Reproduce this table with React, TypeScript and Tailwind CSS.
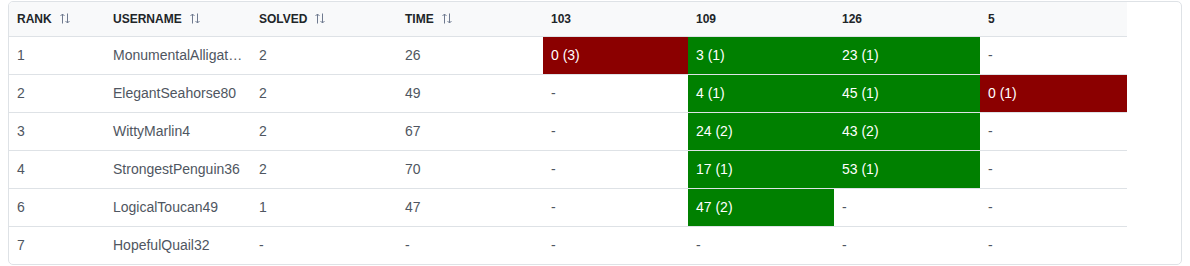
import React from "react";

type Cell = { score: string; ok?: boolean } | null;

type Row = {
  rank: number;
  username: string;
  solved: string;
  time: string;
  cells: Cell[];
};

const problems = ["103", "109", "126", "5"];

// username shown as the leaderboard shows it (already shortened)
const rows: Row[] = [
  {
    rank: 1,
    username: "MonumentalAlligat…",
    solved: "2",
    time: "26",
    cells: [{ score: "0 (3)", ok: false }, { score: "3 (1)", ok: true }, { score: "23 (1)", ok: true }, null],
  },
  {
    rank: 2,
    username: "ElegantSeahorse80",
    solved: "2",
    time: "49",
    cells: [null, { score: "4 (1)", ok: true }, { score: "45 (1)", ok: true }, { score: "0 (1)", ok: false }],
  },
  {
    rank: 3,
    username: "WittyMarlin4",
    solved: "2",
    time: "67",
    cells: [null, { score: "24 (2)", ok: true }, { score: "43 (2)", ok: true }, null],
  },
  {
    rank: 4,
    username: "StrongestPenguin36",
    solved: "2",
    time: "70",
    cells: [null, { score: "17 (1)", ok: true }, { score: "53 (1)", ok: true }, null],
  },
  {
    rank: 6,
    username: "LogicalToucan49",
    solved: "1",
    time: "47",
    cells: [null, { score: "47 (2)", ok: true }, null, null],
  },
  {
    rank: 7,
    username: "HopefulQuail32",
    solved: "-",
    time: "-",
    cells: [null, null, null, null],
  },
];

const SortIcon = () => (
  <svg width="10" height="11" viewBox="0 0 10 11" className="ml-[8px] shrink-0" fill="none">
    <path d="M2.5 10.5V1M0.5 3L2.5 1L4.5 3" stroke="#6f7a8f" strokeWidth="1" />
    <path d="M7.5 0.5V10M5.5 8L7.5 10L9.5 8" stroke="#6f7a8f" strokeWidth="1" />
  </svg>
);

function HeaderCell({ label, sortable }: { label: string; sortable?: boolean }) {
  return (
    <th className="h-[34px] px-2 text-left align-middle border-b border-[#dee2e6] font-bold text-[12px] text-[#212529]">
      <div className="flex items-center">
        <span>{label}</span>
        {sortable && <SortIcon />}
      </div>
    </th>
  );
}

export default function App() {
  return (
    <div className="bg-white pt-[1px] px-2" style={{ fontFamily: '"Liberation Sans", Arial, sans-serif' }}>
      <div className="border border-[#dee2e6] rounded-[5px] overflow-hidden">
        <table className="table-fixed border-collapse w-[1118px]">
          <colgroup>
            <col className="w-[96px]" />
            <col className="w-[146px]" />
            <col className="w-[146px]" />
            <col className="w-[146px]" />
            <col className="w-[145px]" />
            <col className="w-[146px]" />
            <col className="w-[146px]" />
            <col className="w-[147px]" />
          </colgroup>
          <thead className="bg-[#f8f9fa]">
            <tr>
              <HeaderCell label="RANK" sortable />
              <HeaderCell label="USERNAME" sortable />
              <HeaderCell label="SOLVED" sortable />
              <HeaderCell label="TIME" sortable />
              {problems.map((p) => (
                <HeaderCell key={p} label={p} />
              ))}
            </tr>
          </thead>
          <tbody className="text-[14px] text-[#4f5661]">
            {rows.map((r, i) => (
              <tr key={r.rank} className={i < rows.length - 1 ? "border-b border-[#dee2e6]" : ""}>
                <td className="h-[38px] px-2">{r.rank}</td>
                <td className="h-[38px] px-2 whitespace-nowrap">{r.username}</td>
                <td className="h-[38px] px-2">{r.solved}</td>
                <td className="h-[38px] px-2">{r.time}</td>
                {r.cells.map((c, j) =>
                  c ? (
                    <td
                      key={j}
                      className={
                        c.ok
                          ? "h-[38px] px-2 bg-[#008000] text-white"
                          : "h-[38px] px-2 bg-[#8b0000] text-white"
                      }
                    >
                      {c.score}
                    </td>
                  ) : (
                    <td key={j} className="h-[38px] px-2">
                      -
                    </td>
                  ),
                )}
              </tr>
            ))}
          </tbody>
        </table>
      </div>
    </div>
  );
}
